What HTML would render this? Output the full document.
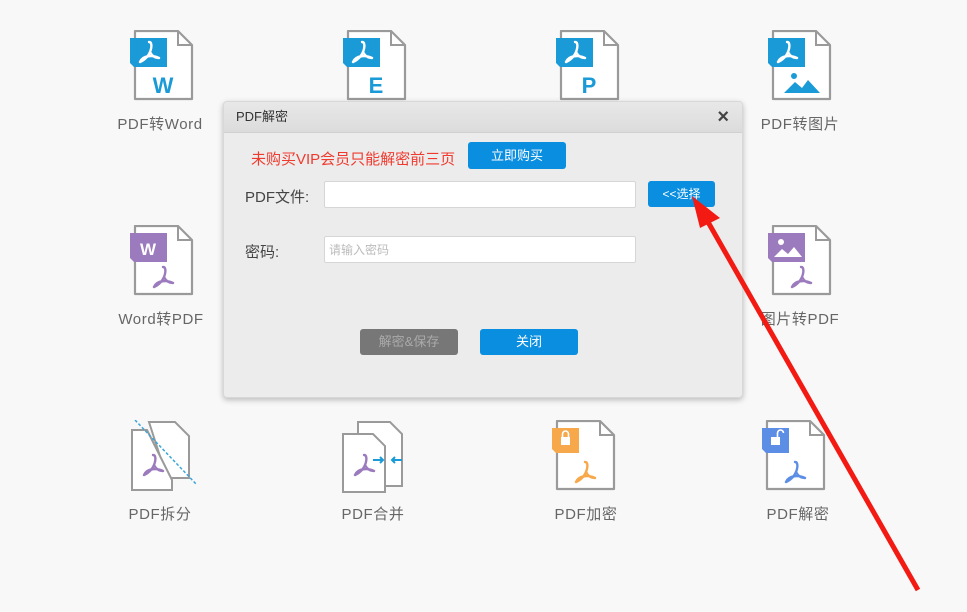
<!DOCTYPE html>
<html><head><meta charset="utf-8"><style>
body{margin:0;width:967px;height:612px;background:#f8f8f8;position:relative;overflow:hidden;font-family:"Liberation Sans","Noto Sans CJK SC",sans-serif;}
.ic{position:absolute;width:70px;height:80px}
.lb{position:absolute;width:140px;text-align:center;font-size:15px;letter-spacing:0.6px;color:#666}
.dlg{position:absolute;left:223px;top:101px;width:518px;height:295px;background:#ececec;border:1px solid #d8d8d8;border-radius:4px;box-shadow:0 2px 6px rgba(0,0,0,.25)}
.tb{height:30px;background:linear-gradient(#e8e8e8,#dcdcdc);border-bottom:1px solid #d0d0d0;font-size:13px;color:#333;line-height:30px;padding-left:12px;border-radius:4px 4px 0 0}
.a{position:absolute}
.btn{position:absolute;background:#0a8ee0;color:#fff;font-size:13px;text-align:center;border-radius:3px}
.inp{position:absolute;background:#fff;border:1px solid #d6d6d6;border-radius:2px}
</style></head><body>
<svg width="0" height="0" style="position:absolute"><defs>
<path id="doc" d="M5 1H48L62 15V69H5Z" fill="#fff" stroke="#9a9a9a" stroke-width="2.2" stroke-linejoin="round"/>
<path id="ear" d="M48 1V15H62" fill="none" stroke="#9a9a9a" stroke-width="2"/>
<path id="pdf" d="M0 0C3 0 3 5 1 10C-1 15 -6 19 -9 20M1 10C3 14 6 16 10 16M-9 20C-6 13 4 13 10 16" fill="none" stroke-width="2.4" stroke-linecap="round"/>
</defs></svg>

<!-- row1 -->
<svg class="ic" style="left:130px;top:30px"><use href="#doc"/><use href="#ear"/><path d="M0 8H37V37H4L0 33Z" fill="#1a9ad6"/><use href="#pdf" x="19" y="12" stroke="#fff"/><text x="33" y="63" font-size="22" font-weight="bold" fill="#1a9ad6" text-anchor="middle" font-family="Liberation Sans">W</text></svg>
<div class="lb" style="left:90px;top:113px">PDF转Word</div>
<svg class="ic" style="left:343px;top:30px"><use href="#doc"/><use href="#ear"/><path d="M0 8H37V37H4L0 33Z" fill="#1a9ad6"/><use href="#pdf" x="19" y="12" stroke="#fff"/><text x="33" y="63" font-size="22" font-weight="bold" fill="#1a9ad6" text-anchor="middle" font-family="Liberation Sans">E</text></svg>
<svg class="ic" style="left:556px;top:30px"><use href="#doc"/><use href="#ear"/><path d="M0 8H37V37H4L0 33Z" fill="#1a9ad6"/><use href="#pdf" x="19" y="12" stroke="#fff"/><text x="33" y="63" font-size="22" font-weight="bold" fill="#1a9ad6" text-anchor="middle" font-family="Liberation Sans">P</text></svg>
<svg class="ic" style="left:768px;top:30px"><use href="#doc"/><use href="#ear"/><path d="M0 8H37V37H4L0 33Z" fill="#1a9ad6"/><use href="#pdf" x="19" y="12" stroke="#fff"/><circle cx="26" cy="46" r="3" fill="#1a9ad6"/><path d="M16 63L27 52L34 58L40 50L52 63Z" fill="#1a9ad6"/></svg>
<div class="lb" style="left:730px;top:113px">PDF转图片</div>

<!-- row2 -->
<svg class="ic" style="left:130px;top:225px"><use href="#doc"/><use href="#ear"/><path d="M0 8H37V37H4L0 33Z" fill="#9b7bbd"/><text x="18" y="30" font-size="17" font-weight="bold" fill="#fff" text-anchor="middle" font-family="Liberation Sans">W</text><use href="#pdf" x="33" y="42" stroke="#9b7bbd"/></svg>
<div class="lb" style="left:91px;top:308px">Word转PDF</div>
<svg class="ic" style="left:768px;top:225px"><use href="#doc"/><use href="#ear"/><path d="M0 8H37V37H4L0 33Z" fill="#9b7bbd"/><circle cx="13" cy="17" r="3" fill="#fff"/><path d="M6 32L14 24L20 29L26 22L34 32Z" fill="#fff"/><use href="#pdf" x="33" y="42" stroke="#9b7bbd"/></svg>
<div class="lb" style="left:730px;top:308px">图片转PDF</div>

<!-- row3 -->
<svg class="ic" style="left:127px;top:420px"><path d="M22 2H48L62 16V58H40Z" fill="#fff" stroke="#9a9a9a" stroke-width="2"/><path d="M5 10H20L45 60V70H5Z" fill="#fff" stroke="#9a9a9a" stroke-width="2"/><path d="M8 0L70 65" stroke="#3aa6d8" stroke-width="1.5" stroke-dasharray="3 2"/><use href="#pdf" x="26" y="35" stroke="#9b7bbd"/></svg>
<div class="lb" style="left:90px;top:503px">PDF拆分</div>
<svg class="ic" style="left:340px;top:420px"><path d="M18 2H50L62 14V66H18Z" fill="#fff" stroke="#9a9a9a" stroke-width="2"/><path d="M3 14H33L45 26V72H3Z" fill="#fff" stroke="#9a9a9a" stroke-width="2"/><use href="#pdf" x="24" y="35" stroke="#9b7bbd"/><path d="M33 40H43M40 37L43 40L40 43M62 40H52M55 37L52 40L55 43" stroke="#1a9ad6" stroke-width="2" fill="none"/></svg>
<div class="lb" style="left:303px;top:503px">PDF合并</div>
<svg class="ic" style="left:552px;top:420px"><use href="#doc"/><use href="#ear"/><path d="M0 8H27V33H4L0 29Z" fill="#f7a84a"/><rect x="9" y="17" width="9" height="8" fill="#fff"/><path d="M10.5 17V14A3 3 0 0 1 16.5 14V17" stroke="#fff" stroke-width="1.6" fill="none"/><use href="#pdf" x="33" y="42" stroke="#f7a84a"/></svg>
<div class="lb" style="left:516px;top:503px">PDF加密</div>
<svg class="ic" style="left:762px;top:420px"><use href="#doc"/><use href="#ear"/><path d="M0 8H27V33H4L0 29Z" fill="#5d8ee6"/><rect x="9" y="17" width="9" height="8" fill="#fff"/><path d="M15.5 17V13A3 3 0 0 1 21.5 13" stroke="#fff" stroke-width="1.6" fill="none"/><use href="#pdf" x="33" y="42" stroke="#5d8ee6"/></svg>
<div class="lb" style="left:728px;top:503px">PDF解密</div>

<div class="dlg">
<div class="tb">PDF解密</div>
<div class="a" style="right:13px;top:4px;font-size:20px;color:#444;font-weight:bold">×</div>
<div class="a" style="left:27px;top:46px;font-size:15px;color:#f03a2e">未购买VIP会员只能解密前三页</div>
<div class="btn" style="left:244px;top:40px;width:98px;height:27px;line-height:27px">立即购买</div>
<div class="a" style="left:21px;top:84px;font-size:15px;color:#444">PDF文件:</div>
<div class="inp" style="left:100px;top:79px;width:310px;height:25px"></div>
<div class="btn" style="left:424px;top:79px;width:67px;height:26px;line-height:26px;font-size:12px">&lt;&lt;选择</div>
<div class="a" style="left:21px;top:139px;font-size:15px;color:#444">密码:</div>
<div class="inp" style="left:100px;top:134px;width:310px;height:25px"><span style="position:absolute;left:4px;top:4px;font-size:12px;color:#bbb">请输入密码</span></div>
<div class="btn" style="left:136px;top:227px;width:98px;height:26px;line-height:26px;background:#777;color:#aaa">解密&amp;保存</div>
<div class="btn" style="left:256px;top:227px;width:98px;height:26px;line-height:26px">关闭</div>
</div>

<svg class="a" style="left:0;top:0" width="967" height="612"><path d="M918 590L708 222" stroke="#f21a12" stroke-width="5"/><path d="M692 196L720 218L700 228Z" fill="#f21a12"/></svg>
</body></html>
